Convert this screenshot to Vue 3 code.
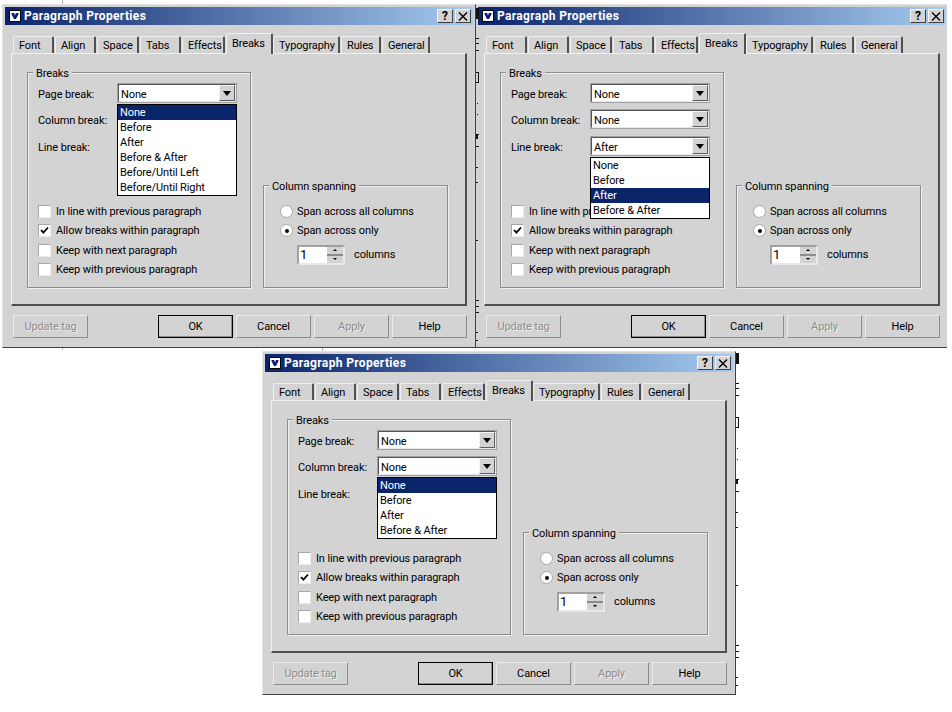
<script setup>
const tabs = [
  { name: 'Font', w: 42 }, { name: 'Align', w: 42 }, { name: 'Space', w: 43 },
  { name: 'Tabs', w: 42 }, { name: 'Effects', w: 44 }, { name: 'Breaks', w: 47, on: true },
  { name: 'Typography', w: 68 }, { name: 'Rules', w: 41 }, { name: 'General', w: 49 }
]
const shortList = ['None', 'Before', 'After', 'Before & After']
const longList = ['None', 'Before', 'After', 'Before & After', 'Before/Until Left', 'Before/Until Right']
const windows = [
  { id: 2, x: 475, y: 4, z: 1, values: ['None', 'None', 'After'], open: 2, items: shortList, sel: 2 },
  { id: 1, x: 2, y: 4, z: 2, values: ['None', 'None', 'None'], open: 0, items: longList, sel: 0 },
  { id: 3, x: 262, y: 351, z: 3, values: ['None', 'None', 'None'], open: 1, items: shortList, sel: 0 }
]
const comboLabels = ['Page break:', 'Column break:', 'Line break:']
const checks = [
  { t: 'In line with previous paragraph' },
  { t: 'Allow breaks within paragraph', on: true },
  { t: 'Keep with next paragraph' },
  { t: 'Keep with previous paragraph' }
]
const frag = [
  [0,8,3,11],[0,38,3,1],[0,43,3,1],[0,50,3,1],[0,72,3,1],[2,72,1,11],[0,82,3,1],
  [1,103,1,1],[1,114,1,1],[0,134,3,1],[0,134,2,5],[0,146,3,1],[0,167,2,1],[0,182,2,1],
  [0,240,2,1],[0,300,3,1],[0,306,3,1],[0,312,3,1],[0,332,2,1],[0,340,2,1]
]
const bits = [
  ...frag.map(f => ({ x: f[0] + 476, y: f[1], w: f[2], h: f[3], c: '#111' })),
  ...frag.map(f => ({ x: f[0] + 736, y: f[1] + 345, w: f[2], h: f[3], c: '#111' })),
  { x: 62, y: 0, w: 1, h: 4, c: '#aaa' },
  { x: 62, y: 348, w: 1, h: 2, c: '#aaa' },
  { x: 322, y: 348, w: 1, h: 3, c: '#aaa' },
  { x: 947, y: 0, w: 5, h: 349, c: '#fff' }
]
</script>

<template>
  <div class="desk">
    <section
      v-for="win in windows"
      :key="win.id"
      class="win"
      :style="{ left: win.x + 'px', top: win.y + 'px', zIndex: win.z }"
    >
      <header class="title">
        <span class="appicon">
          <svg width="12" height="12" viewBox="0 0 12 12">
            <rect x="0.5" y="0.5" width="11" height="11" fill="#fff" stroke="#000" />
            <path d="M2.5 3h2.6l.9 2.6L6.9 3h2.6v1.2L7 9H5L2.5 4.2z" fill="#0a1a80" />
          </svg>
        </span>
        <span class="title-text">Paragraph Properties</span>
        <span class="tbtn help">?</span>
        <span class="tbtn">
          <svg width="10" height="9" viewBox="0 0 10 9">
            <path d="M1 0.5l8 8M9 0.5l-8 8" stroke="#000" stroke-width="1.4" fill="none" />
          </svg>
        </span>
      </header>

      <nav class="tabs">
        <span
          v-for="t in tabs"
          :key="t.name"
          class="tab"
          :class="{ on: t.on }"
          :style="{ width: t.w + 'px' }"
        ><span class="tab-in">{{ t.name }}</span></span>
      </nav>

      <div class="pane">
        <div class="group breaks">
          <span class="legend">Breaks</span>
          <div class="combos">
            <div v-for="(label, i) in comboLabels" :key="label" class="combo-row">
              <span class="combo-label">{{ label }}</span>
              <div class="combo">
                <span class="combo-val">{{ win.values[i] }}</span>
                <span class="combo-btn"><i class="arrow"></i></span>
                <ul v-if="win.open === i" class="list">
                  <li
                    v-for="(item, k) in win.items"
                    :key="item"
                    :class="{ sel: k === win.sel }"
                  >{{ item }}</li>
                </ul>
              </div>
            </div>
          </div>
          <div class="checks">
            <label v-for="c in checks" :key="c.t" class="check">
              <span class="box">
                <svg v-if="c.on" width="9" height="9" viewBox="0 0 9 9">
                  <path d="M1 4l2.4 2.6L8 1.5" fill="none" stroke="#000" stroke-width="1.8" />
                </svg>
              </span>
              <span>{{ c.t }}</span>
            </label>
          </div>
        </div>

        <div class="group span">
          <span class="legend">Column spanning</span>
          <div class="radio"><span class="dot"></span><span>Span across all columns</span></div>
          <div class="radio"><span class="dot on"></span><span>Span across only</span></div>
          <div class="spin-row">
            <div class="spin">
              <span class="spin-val">1</span>
              <span class="spin-btns">
                <span class="spin-b"><i class="up"></i></span>
                <span class="spin-b"><i class="down"></i></span>
              </span>
            </div>
            <span>columns</span>
          </div>
        </div>
      </div>

      <footer class="foot">
        <button class="btn off">Update tag</button>
        <span class="foot-right">
          <button class="btn def">OK</button>
          <button class="btn">Cancel</button>
          <button class="btn off">Apply</button>
          <button class="btn">Help</button>
        </span>
      </footer>
    </section>

    <i
      v-for="(b, n) in bits"
      :key="n"
      class="bit"
      :style="{ left: b.x + 'px', top: b.y + 'px', width: b.w + 'px', height: b.h + 'px', background: b.c }"
    ></i>
  </div>
</template>

<style>
html, body { margin: 0; background: #fff; }
</style>

<style scoped>
.desk {
  position: relative;
  width: 952px;
  height: 712px;
  overflow: hidden;
  background: #fff;
  font: 11px/15px Roboto, "Liberation Sans", Arial, sans-serif;
  letter-spacing: -0.12px;
  color: #000;
}
.bit { position: absolute; z-index: 5; }
.win {
  position: absolute;
  box-sizing: border-box;
  width: 474px;
  height: 344px;
  background: #d3d3d3;
  border: 1px solid;
  border-color: #e4e4e4 #404040 #404040 #e4e4e4;
  padding: 2px;
  display: flex;
  flex-direction: column;
}
.title {
  height: 18px;
  flex: none;
  display: flex;
  align-items: center;
  padding: 0 2px 0 4px;
  background: linear-gradient(90deg, #0a246a, #a6caf0);
  color: #fff;
}
.appicon { display: flex; margin-right: 3px; }
.title-text { flex: 1; font-weight: bold; font-size: 12px; letter-spacing: 0.35px; }
.tbtn {
  box-sizing: border-box;
  width: 16px;
  height: 14px;
  margin-left: 2px;
  background: #d3d3d3;
  border: 1px solid;
  border-color: #f4f4f4 #404040 #404040 #f4f4f4;
  display: flex;
  align-items: center;
  justify-content: center;
  color: #000;
}
.help { font-weight: bold; font-size: 12px; margin-left: 0; }
.tabs {
  flex: none;
  height: 21px;
  margin-top: 7px;
  padding-left: 8px;
  display: flex;
  align-items: flex-end;
  position: relative;
  z-index: 1;
}
.tab { box-sizing: border-box; padding-right: 1px; height: 17px; display: flex; }
.tab-in {
  flex: 1;
  box-sizing: border-box;
  padding: 1px 0 0 5px;
  border: 1px solid;
  border-color: #f0f0f0 #505050 transparent #f0f0f0;
  border-right-width: 2px;
  border-bottom: 0;
  border-radius: 2px 2px 0 0;
  white-space: nowrap;
}
.tab.on { height: 21px; margin-bottom: -1px; padding-right: 0; background: #d3d3d3; }
.tab.on .tab-in { padding-top: 2px; }
.pane {
  flex: none;
  box-sizing: border-box;
  height: 253px;
  margin: 0 6px;
  padding: 18px 17px 16px 15px;
  border: 1px solid;
  border-color: #f0f0f0 #505050 #505050 #f0f0f0;
  border-width: 1px 2px 2px 1px;
  display: flex;
  align-items: flex-end;
  justify-content: space-between;
}
.group {
  box-sizing: border-box;
  border: 1px solid #8c8c8c;
  box-shadow: 1px 1px 0 #f0f0f0, inset 1px 1px 0 #f0f0f0;
}
.legend {
  display: block;
  width: fit-content;
  margin-top: -7px;
  padding: 0 3px;
  background: #d3d3d3;
}
.breaks { width: 224px; height: 216px; padding-left: 10px; position: relative; }
.breaks .legend { margin-left: -5px; }
.span .legend { margin-left: -11px; }
.combos { margin-top: 2px; display: flex; flex-direction: column; gap: 6px; }
.combo-row { display: flex; align-items: center; height: 20px; }
.combo-row:last-child { margin-top: 1px; }
.combo-label { width: 79px; flex: none; padding-top: 2px; }
.combo {
  position: relative;
  box-sizing: border-box;
  width: 120px;
  height: 20px;
  background: #fff;
  border: 2px solid;
  border-color: #555 #e8e8e8 #e8e8e8 #555;
  outline: 1px solid #a0a0a0;
  outline-offset: -1px;
  display: flex;
  align-items: center;
}
.combo-val { flex: 1; padding-left: 2px; padding-top: 2px; }
.combo-btn {
  box-sizing: border-box;
  width: 16px;
  height: 16px;
  background: #d3d3d3;
  border: 1px solid;
  border-color: #f4f4f4 #606060 #606060 #f4f4f4;
  display: flex;
  align-items: center;
  justify-content: center;
}
.arrow {
  width: 0;
  height: 0;
  border-left: 4px solid transparent;
  border-right: 4px solid transparent;
  border-top: 5px solid #000;
}
.list {
  position: absolute;
  left: -2px;
  top: 19px;
  box-sizing: border-box;
  width: 120px;
  margin: 0;
  padding: 0;
  list-style: none;
  background: #fff;
  border: 1px solid #000;
  z-index: 4;
}
.list li { height: 15px; padding-left: 2px; }
.list li.sel { background: #0a246a; color: #fff; }
.checks { margin-top: 48.5px; display: flex; flex-direction: column; gap: 6.5px; }
.check { display: flex; align-items: center; height: 13px; gap: 5px; }
.box {
  box-sizing: border-box;
  width: 13px;
  height: 13px;
  background: #fff;
  border: 1px solid;
  border-color: #a8a8a8 #ececec #ececec #a8a8a8;
  display: flex;
  align-items: center;
  justify-content: center;
}
.span { width: 185px; height: 103px; padding: 0 0 0 16px; }
.radio { display: flex; align-items: center; height: 13px; gap: 4px; margin-top: 11px; white-space: nowrap; }
.radio + .radio { margin-top: 6px; }
.dot {
  box-sizing: border-box;
  width: 13px;
  height: 13px;
  border-radius: 50%;
  background: #fff;
  border: 1px solid #a8a8a8;
  display: flex;
  align-items: center;
  justify-content: center;
}
.dot.on::after { content: ""; width: 4px; height: 4px; border-radius: 50%; background: #000; }
.spin-row { display: flex; align-items: center; gap: 9px; margin: 7.5px 0 0 17px; }
.spin {
  box-sizing: border-box;
  width: 48px;
  height: 20px;
  background: #fff;
  border: 2px solid;
  border-color: #a0a0a0 #e8e8e8 #e8e8e8 #a0a0a0;
  display: flex;
}
.spin-val { flex: 1; padding-left: 1px; font-size: 13px; line-height: 16px; }
.spin-btns { width: 16px; display: flex; flex-direction: column; justify-content: space-between; background: #8c8c8c; }
.spin-b { height: 7px; background: #d3d3d3; display: flex; align-items: center; justify-content: center; }
.up, .down { width: 0; height: 0; border-left: 2px solid transparent; border-right: 2px solid transparent; }
.up { border-bottom: 2px solid #000; }
.down { border-top: 2px solid #000; }
.foot {
  flex: none;
  margin-top: 9px;
  padding: 0 6px 0 8px;
  display: flex;
  justify-content: space-between;
}
.foot-right { display: flex; gap: 3px; }
.btn {
  box-sizing: border-box;
  width: 75px;
  height: 23px;
  padding: 0;
  background: #d3d3d3;
  border: 1px solid;
  border-color: #ececec #8c8c8c #8c8c8c #ececec;
  font: inherit;
  letter-spacing: inherit;
  color: #000;
}
.btn.def { border: 1px solid #000; box-shadow: inset -1px -1px 0 #8c8c8c; }
.btn.off { color: #8c8c8c; text-shadow: 1px 1px 0 #f0f0f0; }
</style>
